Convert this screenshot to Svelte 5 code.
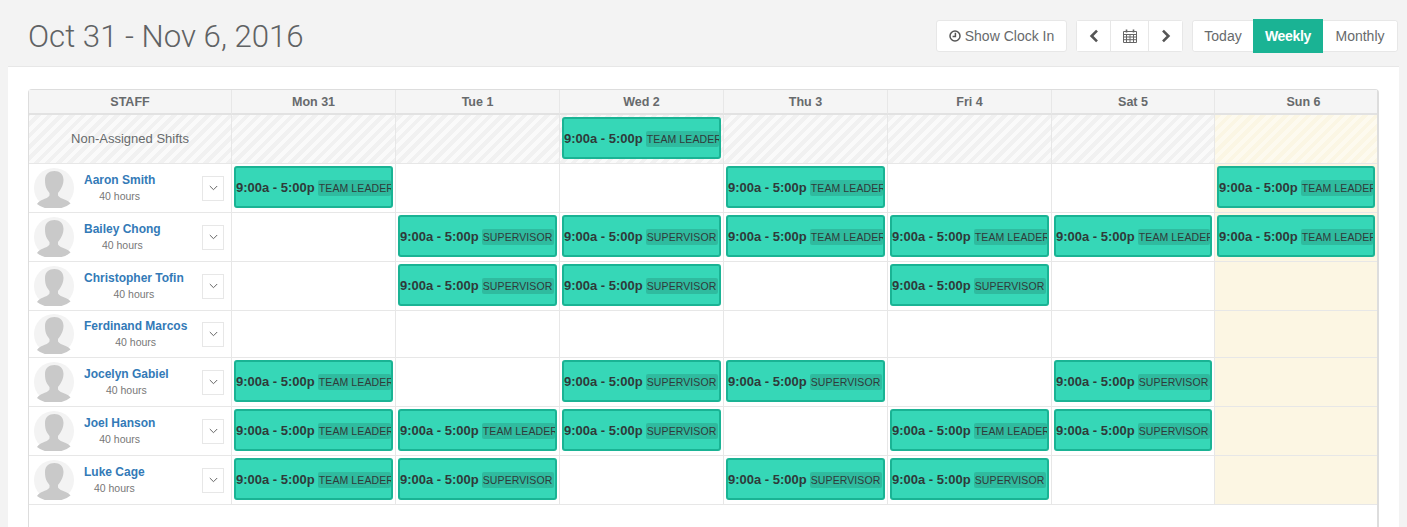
<script>
    const days = ["Mon 31", "Tue 1", "Wed 2", "Thu 3", "Fri 4", "Sat 5", "Sun 6"];
    const T = "TEAM LEADER";
    const S = "SUPERVISOR";

    const openShifts = [null, null, T, null, null, null, null];

    const staff = [
        { name: "Aaron Smith", shifts: [T, null, null, T, null, null, T] },
        { name: "Bailey Chong", shifts: [null, S, S, T, T, T, T] },
        { name: "Christopher Tofin", shifts: [null, S, S, null, S, null, null] },
        { name: "Ferdinand Marcos", shifts: [null, null, null, null, null, null, null], short: true },
        { name: "Jocelyn Gabiel", shifts: [T, null, S, S, null, S, null] },
        { name: "Joel Hanson", shifts: [T, T, S, null, T, S, null] },
        { name: "Luke Cage", shifts: [T, S, null, S, S, null, null] }
    ];
</script>

{#snippet shift(role)}
    <div class="shift">
        <span class="time">9:00a - 5:00p</span>
        <span class="role">{role}</span>
    </div>
{/snippet}

<div class="page">
    <header class="top">
        <h1>Oct 31 - Nov 6, 2016</h1>
        <div class="tools">
            <button class="btn clock">
                <svg width="12" height="12" viewBox="0 0 12 12" fill="none" stroke="#555" stroke-width="1.5">
                    <circle cx="6" cy="6" r="5" />
                    <path d="M6.4 2.800v3.800H3.600" />
                </svg>
                Show Clock In
            </button>
            <div class="group nav">
                <button class="btn prev" aria-label="Previous">
                    <svg width="10" height="14" viewBox="0 0 10 14" fill="none" stroke="#555" stroke-width="2.6">
                        <path d="M8 1.600 2.600 7 8 12.400" />
                    </svg>
                </button>
                <button class="btn cal" aria-label="Calendar">
                    <svg width="14" height="14" viewBox="0 0 14 14" fill="none" stroke="#666" stroke-width="1">
                        <path d="M.5 2.500h13v11H.5zM.5 5.500h13M.5 8h13M.5 10.700h13M3.500 5.500v8M7 5.500v8M10.500 5.500v8" />
                        <path d="M3.500.5v3M10.500.5v3" stroke-width="1.600" />
                    </svg>
                </button>
                <button class="btn next" aria-label="Next">
                    <svg width="10" height="14" viewBox="0 0 10 14" fill="none" stroke="#555" stroke-width="2.6">
                        <path d="M2 1.600 7.400 7 2 12.400" />
                    </svg>
                </button>
            </div>
            <div class="group views">
                <button class="btn today">Today</button>
                <button class="btn weekly">Weekly</button>
                <button class="btn monthly">Monthly</button>
            </div>
        </div>
    </header>

    <main class="panel">
        <div class="sheet">
            <table>
                <colgroup>
                    <col class="staff-col" />
                    {#each days as day, i}
                        <col class={i < 5 ? "day-col" : i === 5 ? "sat-col" : "sun-col"} />
                    {/each}
                </colgroup>
                <thead>
                    <tr>
                        <th>STAFF</th>
                        {#each days as day}
                            <th>{day}</th>
                        {/each}
                    </tr>
                </thead>
                <tbody>
                    <tr class="open">
                        <td class="open-label">Non-Assigned Shifts</td>
                        {#each openShifts as role, i}
                            <td class:sun={i === 6}>
                                {#if role}{@render shift(role)}{/if}
                            </td>
                        {/each}
                    </tr>
                    {#each staff as person}
                        <tr class:short={person.short}>
                            <td>
                                <div class="person">
                                    <svg class="avatar" viewBox="0 0 40 40">
                                        <circle cx="20" cy="20" r="20" fill="#f3f3f3" />
                                        <path
                                            d="M20.500 3c-5.500 0-9.500 3-9.500 9 0 4 .5 7 2 9.500.8 1.300 1.500 2.500 2.500 3.500v2.500c-1 2-4 3-7 4.200-2.500 1-4 2-5.500 4.300A20 20 0 0 0 20 40a20 20 0 0 0 16.500-4.500c-1.500-2-3-3-5.500-3.800-3-1.200-6-2.200-7-4.200V25c1-1 1.700-2.200 2.500-3.500 1.500-2.500 3-5.500 3-9.500 0-6-4-9-9-9z"
                                            fill="#c9c9c9"
                                        />
                                    </svg>
                                    <div class="who">
                                        <a href="#staff">{person.name}</a>
                                        <small>40 hours</small>
                                    </div>
                                    <button class="menu" aria-label="Options">
                                        <svg width="9" height="6" viewBox="0 0 9 6" fill="none" stroke="#666" stroke-width="1">
                                            <path d="M.8 1 4.500 4.700 8.200 1" />
                                        </svg>
                                    </button>
                                </div>
                            </td>
                            {#each person.shifts as role, i}
                                <td class:sun={i === 6}>
                                    {#if role}{@render shift(role)}{/if}
                                </td>
                            {/each}
                        </tr>
                    {/each}
                </tbody>
            </table>
        </div>
    </main>
</div>

<style>
    :global(html),
    :global(body) {
        overflow: hidden;
        height: 527px;
        background: #f3f3f3;
    }

    .page {
        font-family: "Liberation Sans", Arial, sans-serif;
        color: #676a6c;
        height: 527px;
        overflow: hidden;
    }

    .top {
        display: flex;
        justify-content: space-between;
        align-items: center;
        height: 66px;
        box-sizing: border-box;
        padding: 6px 9px 0 28px;
    }

    h1 {
        margin: 0;
        font-family: Roboto, "Liberation Sans", sans-serif;
        font-size: 31.2px;
        font-weight: 300;
        color: #5f6264;
    }

    .tools {
        display: flex;
        gap: 9px;
        align-items: center;
    }

    .group {
        display: flex;
        align-items: center;
        background: #fff;
        border: 1px solid #e7e7e7;
        border-radius: 3px;
        height: 32px;
        box-sizing: border-box;
    }

    button {
        font-family: inherit;
        padding: 0;
        margin: 0;
        cursor: pointer;
    }

    .btn {
        background: #fff;
        border: 0;
        color: #676a6c;
        font-size: 14px;
        height: 30px;
        display: flex;
        align-items: center;
        justify-content: center;
    }

    .clock {
        width: 131px;
        height: 32px;
        gap: 4px;
        border: 1px solid #e7e7e7;
        border-radius: 3px;
        box-sizing: border-box;
    }

    .nav .btn {
        border-left: 1px solid #e7e7e7;
        box-sizing: content-box;
    }

    .nav .prev {
        border-left: 0;
        width: 33px;
    }

    .nav .cal {
        width: 37px;
    }

    .nav .next {
        width: 33px;
    }

    .views .btn {
        box-sizing: border-box;
    }

    .views .today {
        width: 60px;
        border-radius: 3px 0 0 3px;
    }

    .views .weekly {
        width: 70px;
        height: 34px;
        background: #1ab394;
        color: #fff;
        font-weight: 700;
        letter-spacing: -0.3px;
    }

    .views .monthly {
        width: 74px;
        border-radius: 0 3px 3px 0;
    }

    .panel {
        margin: 0 8px;
        background: #fff;
        border-top: 1px solid #e7e7e7;
        padding: 22px 20px 0;
        height: 480px;
        box-sizing: border-box;
    }

    .sheet {
        border: 1px solid #ddd;
        border-right-width: 2px;
        border-bottom: 0;
        border-radius: 4px 4px 0 0;
        height: 500px;
        box-sizing: border-box;
    }

    table {
        border-collapse: separate;
        border-spacing: 0;
        table-layout: fixed;
        width: 1348px;
    }

    .staff-col {
        width: 203px;
    }

    .day-col {
        width: 164px;
    }

    .sat-col {
        width: 163px;
    }

    .sun-col {
        width: 162px;
    }

    th {
        height: 22px;
        padding: 1px 0 0;
        font-size: 12.5px;
        font-weight: 700;
        background: #f5f5f5;
        border-right: 1px solid #e7e7e7;
        border-bottom: 2px solid #e2e2e2;
        box-sizing: content-box;
    }

    th:last-child {
        border-right: 0;
        padding-left: 15px;
    }

    td:last-child {
        border-right: 0;
    }

    td {
        height: 48px;
        padding: 0;
        border-right: 1px solid #e7e7e7;
        border-bottom: 1px solid #e7e7e7;
        vertical-align: middle;
        overflow: hidden;
    }

    tr.short td {
        height: 46px;
    }

    td.sun {
        background: #fcf6e3;
    }

    .open td {
        background: repeating-linear-gradient(-45deg, #f1f1f1 0 4px, #fafafa 4px 8px);
    }

    .open td.sun {
        background: repeating-linear-gradient(-45deg, #fbf6e4 0 4px, #fdfaef 4px 8px);
    }

    .open .open-label {
        text-align: center;
        font-size: 13px;
        color: #676a6c;
        padding-bottom: 2px;
        height: 46px;
    }

    .person {
        display: flex;
        align-items: center;
        padding-left: 5px;
        padding-right: 7px;
        height: 48px;
    }

    tr.short .person {
        height: 46px;
    }

    .avatar {
        width: 40px;
        height: 40px;
        flex: none;
    }

    .who {
        margin-left: 10px;
        display: flex;
        flex-direction: column;
        align-items: center;
    }

    .who a {
        color: #337ab7;
        font-size: 12px;
        font-weight: 700;
        line-height: 16px;
        text-decoration: none;
    }

    .who small {
        font-size: 10.5px;
        line-height: 15px;
        margin-top: 1px;
        color: #777;
    }

    .menu {
        margin-left: auto;
        width: 22px;
        height: 25px;
        background: #fff;
        border: 1px solid #e7e7e7;
        display: flex;
        align-items: center;
        justify-content: center;
    }

    .shift {
        margin: 0 2px 2px;
        height: 42px;
        box-sizing: border-box;
        background: #36d7b7;
        border: 2px solid #1ab394;
        border-radius: 3px;
        display: flex;
        align-items: center;
        gap: 3px;
        padding-left: 0;
        overflow: hidden;
        white-space: nowrap;
        color: #2f3a3a;
    }

    .time {
        font-size: 13px;
        font-weight: 700;
        flex: none;
    }

    .role {
        font-size: 10.5px;
        letter-spacing: 0.1px;
        line-height: 16px;
        margin-top: 2px;
        padding: 0 2px 0 1px;
        background: rgba(0, 0, 0, 0.13);
        border-radius: 2px;
        flex: 0 1 auto;
        min-width: 0;
        overflow: hidden;
    }
</style>
